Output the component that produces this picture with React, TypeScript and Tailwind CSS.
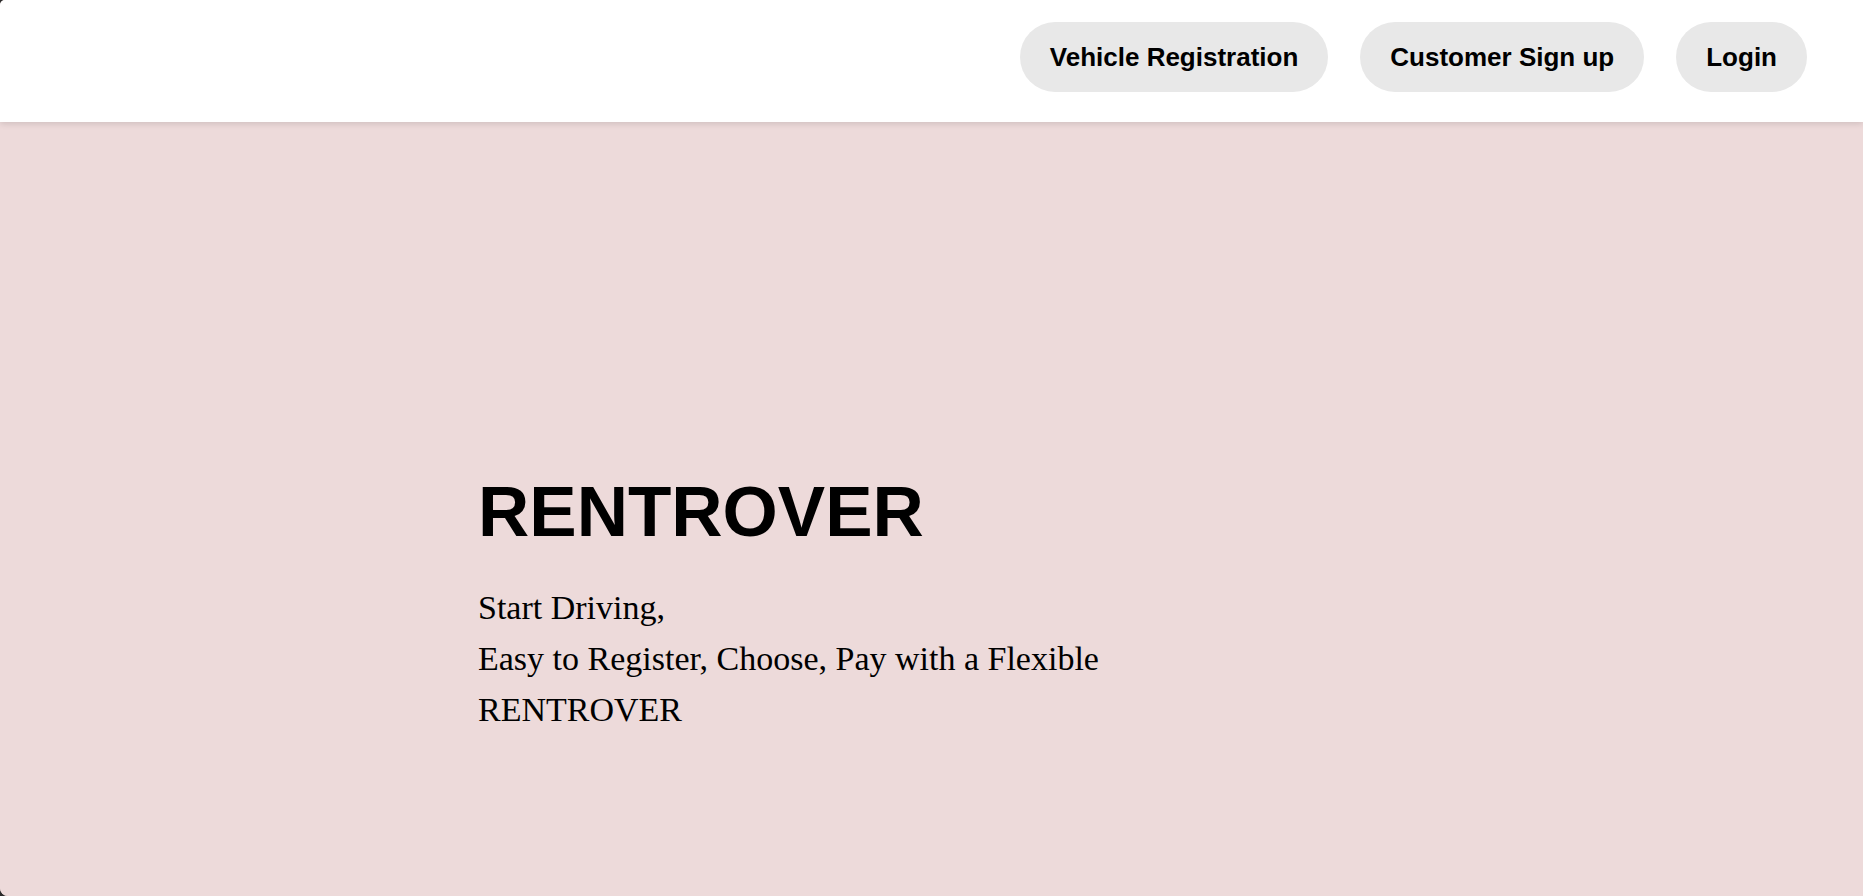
const navItems = ["Vehicle Registration", "Customer Sign up", "Login"];

function Header() {
    return (
        <header className="relative z-10 h-[122px] bg-white flex items-start justify-end pt-[22px] pr-[56px] gap-[32px] shadow-[0_2px_6px_rgba(0,0,0,0.12)]">
            {navItems.map((item) => (
                <button
                    key={item}
                    className="h-[70px] px-[30px] rounded-full bg-[#e8e8e8] text-[26px] font-bold text-black font-['Liberation_Sans',Arial,sans-serif]"
                >
                    {item}
                </button>
            ))}
        </header>
    );
}

function Hero() {
    return (
        <section className="flex-1 bg-[#eddada] pl-[478px] pt-[355px]">
            <h1 className="text-[71px] leading-[70px] font-bold text-black font-['Liberation_Sans',Arial,sans-serif]">
                RENTROVER
            </h1>
            <p className="mt-[35px] text-[34px] leading-[51px] text-black font-['Liberation_Serif',Georgia,serif]">
                Start Driving,
                <br />
                Easy to Register, Choose, Pay with a Flexible
                <br />
                RENTROVER
            </p>
        </section>
    );
}

export default function App() {
    return (
        <div className="h-screen w-full bg-[#2b2b2b]">
            <div className="h-full flex flex-col overflow-hidden rounded-tl-[5px] rounded-bl-[8px] bg-[#eddada]">
                <Header />
                <Hero />
            </div>
        </div>
    );
}
